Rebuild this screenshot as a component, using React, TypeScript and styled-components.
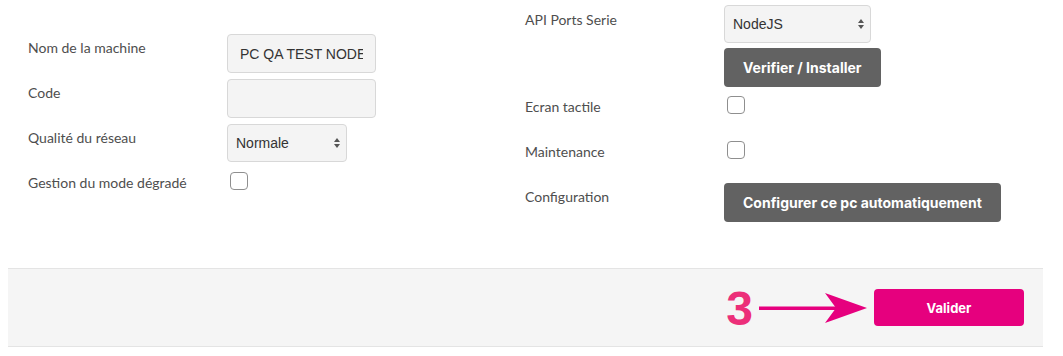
import React from "react";
import styled, { createGlobalStyle } from "styled-components";

const Global = createGlobalStyle`
  html, body { margin: 0; padding: 0; background: #fff; }
  body { font-family: Lato, "Open Sans", sans-serif; }
  * { box-sizing: border-box; }
`;

const Page = styled.div`
  width: 1063px;
  padding: 0 20px 0 8px;
`;

const Form = styled.div`
  display: grid;
  grid-template-columns: 497px 1fr;
  align-items: start;
  padding-bottom: 46px;
`;

const Column = styled.div<{ $top: number }>`
  display: flex;
  flex-direction: column;
  gap: 6px;
  padding: ${(p) => p.$top}px 0 0 20px;
`;

const Row = styled.div`
  display: grid;
  grid-template-columns: 199px auto;
  align-items: start;
  justify-items: start;
  justify-content: start;
  min-height: 39px;
`;

const Label = styled.label<{ $pad?: number }>`
  font-family: Lato, sans-serif;
  font-size: 14px;
  line-height: 20px;
  color: #4e4e4e;
  padding-top: ${(p) => p.$pad ?? 4}px;
`;

const Stack = styled.div`
  display: flex;
  flex-direction: column;
  align-items: flex-start;
  gap: 5px;
`;

const TextInput = styled.input`
  width: 149px;
  height: 39px;
  padding: 0 12px;
  background: #f4f4f4;
  border: 1px solid #d8d8d8;
  border-radius: 4px;
  font-family: "Liberation Sans", Arial, sans-serif;
  font-size: 14px;
  color: #333;
  outline: none;
`;

const SelectWrap = styled.div<{ $w: number }>`
  position: relative;
  width: ${(p) => p.$w}px;
  height: 38px;
`;

const Select = styled.select`
  appearance: none;
  -webkit-appearance: none;
  width: 100%;
  height: 100%;
  padding: 0 24px 0 8px;
  background: #f4f4f4;
  border: 1px solid #d8d8d8;
  border-radius: 4px;
  font-family: "Liberation Sans", Arial, sans-serif;
  font-size: 14px;
  color: #333;
  outline: none;
`;

const Arrows = styled.svg`
  position: absolute;
  right: 6px;
  top: 50%;
  transform: translateY(-50%);
  pointer-events: none;
`;

const Checkbox = styled.input.attrs({ type: "checkbox" })`
  appearance: none;
  -webkit-appearance: none;
  width: 18px;
  height: 18px;
  margin: 3px 0 0 3px;
  border: 1px solid #8f8f8f;
  border-radius: 4px;
  background: #fff;
`;

const DarkButton = styled.button`
  height: 39px;
  padding: 0 19px;
  background: #626262;
  color: #fff;
  border: none;
  border-radius: 4px;
  font-family: Inter, "Liberation Sans", sans-serif;
  font-weight: 700;
  font-size: 14px;
  cursor: pointer;
`;

const Footer = styled.div`
  height: 79px;
  background: #f5f5f5;
  border-top: 1px solid #e4e4e4;
  border-bottom: 1px solid #e4e4e4;
  display: flex;
  align-items: center;
  justify-content: flex-end;
  padding-right: 19px;
`;

const StepNumber = styled.span`
  font-family: "Liberation Sans", Arial, sans-serif;
  font-weight: 700;
  font-size: 48px;
  line-height: 1;
  color: #ec2f79;
  margin-right: 6px;
  margin-top: 2px;
`;

const ArrowIcon = styled.svg`
  margin-right: 7px;
`;

const PinkButton = styled.button`
  width: 150px;
  height: 37px;
  background: #e6007e;
  color: #fff;
  border: none;
  border-radius: 4px;
  font-family: Inter, "Liberation Sans", sans-serif;
  font-weight: 700;
  font-size: 13px;
  cursor: pointer;
`;

const SelectArrows = () => (
  <Arrows width="8" height="12" viewBox="0 0 8 12">
    <path d="M4 1 L7 5 L1 5 Z" fill="#555" />
    <path d="M4 11 L7 7 L1 7 Z" fill="#555" />
  </Arrows>
);

export default function App() {
  return (
    <Page>
      <Global />
      <Form>
        <Column $top={34}>
          <Row>
            <Label>Nom de la machine</Label>
            <TextInput defaultValue="PC QA TEST NODEJS" />
          </Row>
          <Row>
            <Label>Code</Label>
            <TextInput defaultValue="" />
          </Row>
          <Row>
            <Label>Qualité du réseau</Label>
            <SelectWrap $w={120}>
              <Select defaultValue="Normale">
                <option>Normale</option>
                <option>Faible</option>
              </Select>
              <SelectArrows />
            </SelectWrap>
          </Row>
          <Row>
            <Label>Gestion du mode dégradé</Label>
            <Checkbox />
          </Row>
        </Column>
        <Column $top={5}>
          <Row>
            <Label $pad={5}>API Ports Serie</Label>
            <Stack>
              <SelectWrap $w={147}>
                <Select defaultValue="NodeJS">
                  <option>NodeJS</option>
                  <option>Java</option>
                </Select>
                <SelectArrows />
              </SelectWrap>
              <DarkButton>Verifier / Installer</DarkButton>
            </Stack>
          </Row>
          <Row>
            <Label>Ecran tactile</Label>
            <Checkbox />
          </Row>
          <Row>
            <Label>Maintenance</Label>
            <Checkbox />
          </Row>
          <Row>
            <Label>Configuration</Label>
            <DarkButton>Configurer ce pc automatiquement</DarkButton>
          </Row>
        </Column>
      </Form>
      <Footer>
        <StepNumber>3</StepNumber>
        <ArrowIcon width="108" height="32" viewBox="0 0 108 32">
          <rect x="0" y="14.5" width="78" height="3.5" fill="#e6007e" />
          <polygon points="66,1 108,16 66,31 77,16" fill="#e6007e" />
        </ArrowIcon>
        <PinkButton>Valider</PinkButton>
      </Footer>
    </Page>
  );
}
